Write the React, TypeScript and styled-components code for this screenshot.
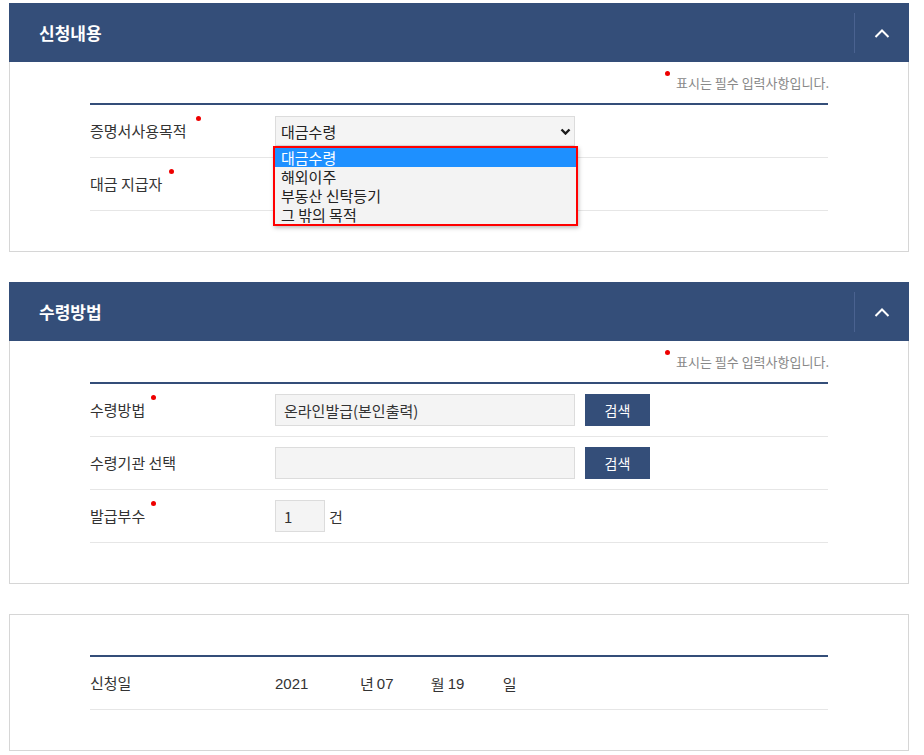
import React from "react";
import styled, { createGlobalStyle } from "styled-components";

const GlobalStyle = createGlobalStyle`
  html, body {
    margin: 0;
    padding: 0;
    background: #ffffff;
  }
  body {
    font-family: "Noto Sans CJK KR", "Noto Sans", "Liberation Sans", sans-serif;
    color: #333333;
  }
`;

const NAVY = "#344e79";

const Page = styled.div`
  display: flex;
  flex-direction: column;
  gap: 30px;
  width: 900px;
  padding: 3px 0 0 9px;
`;

const Panel = styled.section`
  display: flex;
  flex-direction: column;
`;

const Header = styled.div`
  display: flex;
  align-items: center;
  height: 59px;
  background: ${NAVY};
`;

const Title = styled.h2`
  flex: 1;
  margin: 0;
  padding-left: 30px;
  font-size: 17px;
  font-weight: 700;
  color: #ffffff;
  line-height: 20px;
`;

const Toggle = styled.button`
  display: flex;
  align-items: center;
  justify-content: center;
  width: 55px;
  height: 40px;
  padding: 0;
  border: 0;
  border-left: 1px solid #4a6290;
  background: transparent;
  cursor: pointer;
`;

const Body = styled.div<{ $top?: boolean }>`
  border: 1px solid #d6d6d6;
  border-top: ${(p) => (p.$top ? "1px solid #d6d6d6" : "0")};
  padding: 0 80px 40px;
`;

const Note = styled.div<{ $height?: number }>`
  display: flex;
  justify-content: flex-end;
  align-items: center;
  height: ${(p) => p.$height ?? 41}px;
  font-size: 13px;
  color: #888888;
  line-height: 20px;
`;

const NoteText = styled.span`
  position: relative;
  margin-right: -1px;
`;

const Dot = styled.span<{ $top?: number; $right?: number }>`
  position: absolute;
  top: ${(p) => p.$top ?? -5}px;
  right: ${(p) => p.$right ?? -14}px;
  width: 5px;
  height: 5px;
  border-radius: 50%;
  background: #ee0000;
`;

const NoteDot = styled(Dot)`
  left: -11px;
  right: auto;
  top: -2px;
`;

const Table = styled.div`
  border-top: 2px solid ${NAVY};
`;

const Row = styled.div`
  display: grid;
  grid-template-columns: 185px 1fr;
  align-items: center;
  min-height: 52px;
  border-bottom: 1px solid #e6e6e6;
`;

const Label = styled.span`
  position: relative;
  justify-self: start;
  font-size: 15px;
  line-height: 20px;
  color: #333333;
`;

const Field = styled.div`
  display: flex;
  align-items: center;
  gap: 10px;
`;

const SelectWrap = styled.div`
  position: relative;
  width: 300px;
`;

const SelectBox = styled.div`
  display: flex;
  align-items: center;
  justify-content: space-between;
  height: 30px;
  padding: 0 3px 0 5px;
  border: 1px solid #dcdcdc;
  background: #f4f4f4;
  box-sizing: border-box;
  font-size: 15px;
  color: #222222;
`;

const OptionList = styled.ul`
  position: absolute;
  top: 30px;
  left: -2px;
  width: 305px;
  margin: 0;
  padding: 0;
  list-style: none;
  border: 2px solid #ff0000;
  background: #f3f3f3;
  box-shadow: 1px 2px 4px rgba(0, 0, 0, 0.25);
  box-sizing: border-box;
  z-index: 2;
`;

const Option = styled.li<{ $selected?: boolean }>`
  height: 19px;
  padding-left: 6px;
  font-size: 15px;
  line-height: 19px;
  color: ${(p) => (p.$selected ? "#ffffff" : "#222222")};
  background: ${(p) => (p.$selected ? "#1e90ff" : "transparent")};
`;

const Input = styled.div<{ $width: number }>`
  display: flex;
  align-items: center;
  width: ${(p) => p.$width}px;
  height: 32px;
  padding: 0 8px;
  border: 1px solid #dcdcdc;
  background: #f4f4f4;
  box-sizing: border-box;
  font-size: 15px;
  color: #333333;
`;

const SearchButton = styled.button`
  width: 65px;
  height: 32px;
  border: 0;
  background: ${NAVY};
  color: #ffffff;
  font-family: inherit;
  font-size: 14px;
  cursor: pointer;
`;

const Unit = styled.span`
  font-size: 15px;
  color: #333333;
  margin-left: -6px;
`;

const DateLine = styled.div`
  display: flex;
  align-items: center;
  font-size: 15px;
  color: #333333;
`;

const DateNum = styled.span<{ $width: number }>`
  width: ${(p) => p.$width}px;
  padding-left: ${(p) => (p.$width > 80 ? 0 : 3)}px;
  box-sizing: border-box;
  font-family: "Liberation Sans", sans-serif;
  font-size: 15px;
`;

function ChevronUp() {
  return (
    <svg width="16" height="10" viewBox="0 0 16 10">
      <polyline points="1.5,9 8,2.5 14.5,9" fill="none" stroke="#ffffff" strokeWidth="2" />
    </svg>
  );
}

function ChevronDown() {
  return (
    <svg width="11" height="7" viewBox="0 0 11 7">
      <polyline points="1.5,1.5 5.5,5.5 9.5,1.5" fill="none" stroke="#1a1a1a" strokeWidth="2.4" />
    </svg>
  );
}

function PanelHead({ title }: { title: string }) {
  return (
    <Header>
      <Title>{title}</Title>
      <Toggle aria-label="접기">
        <ChevronUp />
      </Toggle>
    </Header>
  );
}

function RequiredNote() {
  return (
    <Note>
      <NoteText>
        <NoteDot />
        표시는 필수 입력사항입니다.
      </NoteText>
    </Note>
  );
}

const purposes = ["대금수령", "해외이주", "부동산 신탁등기", "그 밖의 목적"];

export default function App() {
  return (
    <>
      <GlobalStyle />
      <Page>
        <Panel>
          <PanelHead title="신청내용" />
          <Body>
            <RequiredNote />
            <Table>
              <Row>
                <Label>
                  증명서사용목적
                  <Dot $right={-14} />
                </Label>
                <SelectWrap>
                  <SelectBox>
                    <span>대금수령</span>
                    <ChevronDown />
                  </SelectBox>
                  <OptionList>
                    {purposes.map((p, i) => (
                      <Option key={p} $selected={i === 0}>
                        {p}
                      </Option>
                    ))}
                  </OptionList>
                </SelectWrap>
              </Row>
              <Row>
                <Label>
                  대금 지급자
                  <Dot $right={-12} />
                </Label>
                <Field />
              </Row>
            </Table>
          </Body>
        </Panel>

        <Panel>
          <PanelHead title="수령방법" />
          <Body>
            <RequiredNote />
            <Table>
              <Row>
                <Label>
                  수령방법
                  <Dot $right={-11} />
                </Label>
                <Field>
                  <Input $width={300}>온라인발급(본인출력)</Input>
                  <SearchButton>검색</SearchButton>
                </Field>
              </Row>
              <Row>
                <Label>수령기관 선택</Label>
                <Field>
                  <Input $width={300} />
                  <SearchButton>검색</SearchButton>
                </Field>
              </Row>
              <Row>
                <Label>
                  발급부수
                  <Dot $right={-11} />
                </Label>
                <Field>
                  <Input $width={50}>1</Input>
                  <Unit>건</Unit>
                </Field>
              </Row>
            </Table>
          </Body>
        </Panel>

        <Panel>
          <Body $top>
            <Note $height={40} />
            <Table>
              <Row>
                <Label>신청일</Label>
                <DateLine>
                  <DateNum $width={85}>2021</DateNum>
                  <span>년</span>
                  <DateNum $width={57}>07</DateNum>
                  <span>월</span>
                  <DateNum $width={58}>19</DateNum>
                  <span>일</span>
                </DateLine>
              </Row>
            </Table>
          </Body>
        </Panel>
      </Page>
    </>
  );
}
